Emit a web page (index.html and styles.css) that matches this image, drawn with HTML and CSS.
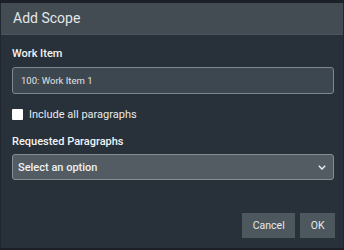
FILE: index.html
```html
<!DOCTYPE html>
<html lang="en">
<head>
    <meta charset="UTF-8">
    <title>Add Scope</title>
    <link rel="stylesheet" href="styles.css">
</head>
<body>
    <div class="dialog">
        <!-- Header -->
        <div class="dialog-header">Add Scope</div>

        <!-- Form -->
        <div class="dialog-body">
            <label class="field-label">Work Item</label>
            <div class="text-input">100: Work Item 1</div>

            <label class="check-row">
                <span class="check-box"></span>
                <span>Include all paragraphs</span>
            </label>

            <label class="field-label">Requested Paragraphs</label>
            <div class="select">
                <span>Select an option</span>
                <svg class="chevron" width="8" height="5" viewBox="0 0 8 5">
                    <path d="M0.8 0.8 L4 4 L7.2 0.8" fill="none" stroke="#e6e9eb" stroke-width="1.5"/>
                </svg>
            </div>
        </div>

        <!-- Buttons -->
        <div class="dialog-footer">
            <button class="btn">Cancel</button>
            <button class="btn">OK</button>
        </div>
    </div>
</body>
</html>
```

FILE: styles.css
```css
body {
    margin: 0;
    padding: 0;
    background-color: #1a2026;
    font-family: Roboto, "Liberation Sans", sans-serif;
    color: #e6e9eb;
}

.dialog {
    margin-top: 3px;
    height: 245px;
    background-color: #283139;
    border-left: 1px solid #20272e;
    border-right: 1px solid #20272e;
    display: flex;
    flex-direction: column;
}

.dialog-header {
    height: 31px;
    line-height: 31px;
    padding-left: 12px;
    font-size: 14px;
    color: #e3e7e9;
    background-color: #424c52;
    border-bottom: 1px solid #4a545a;
}

.dialog-body {
    padding: 12px 9px 0 11px;
    display: flex;
    flex-direction: column;
}

.field-label {
    font-size: 11px;
    font-weight: 500;
    color: #f2f4f5;
    line-height: 13px;
}

.text-input {
    margin-top: 7px;
    height: 25px;
    line-height: 25px;
    padding-left: 8px;
    font-size: 9.5px;
    color: #e0e4e6;
    background-color: #3d474f;
    border: 1px solid #7d878d;
    border-radius: 3px;
}

.check-row {
    margin-top: 14px;
    display: flex;
    align-items: center;
    gap: 6px;
    font-size: 11px;
    color: #e6e9eb;
    line-height: 13px;
}

.check-box {
    width: 11px;
    height: 11px;
    background-color: #fff;
    border-radius: 1px;
}

.check-row + .field-label {
    margin-top: 14px;
}

.select {
    margin-top: 6px;
    height: 24px;
    padding: 0 7px 0 5px;
    display: flex;
    align-items: center;
    justify-content: space-between;
    font-size: 11px;
    font-weight: 500;
    color: #eef0f1;
    background-color: #535c63;
    border: 1px solid #858e93;
    border-radius: 3px;
}

.dialog-footer {
    margin-top: auto;
    padding: 0 8px 10px 0;
    display: flex;
    justify-content: flex-end;
    gap: 5px;
}

.btn {
    height: 25px;
    padding: 0 10.5px;
    border: none;
    border-radius: 0;
    font-family: inherit;
    font-size: 10.5px;
    color: #e6e9eb;
    background-color: #4d575e;
}
```
